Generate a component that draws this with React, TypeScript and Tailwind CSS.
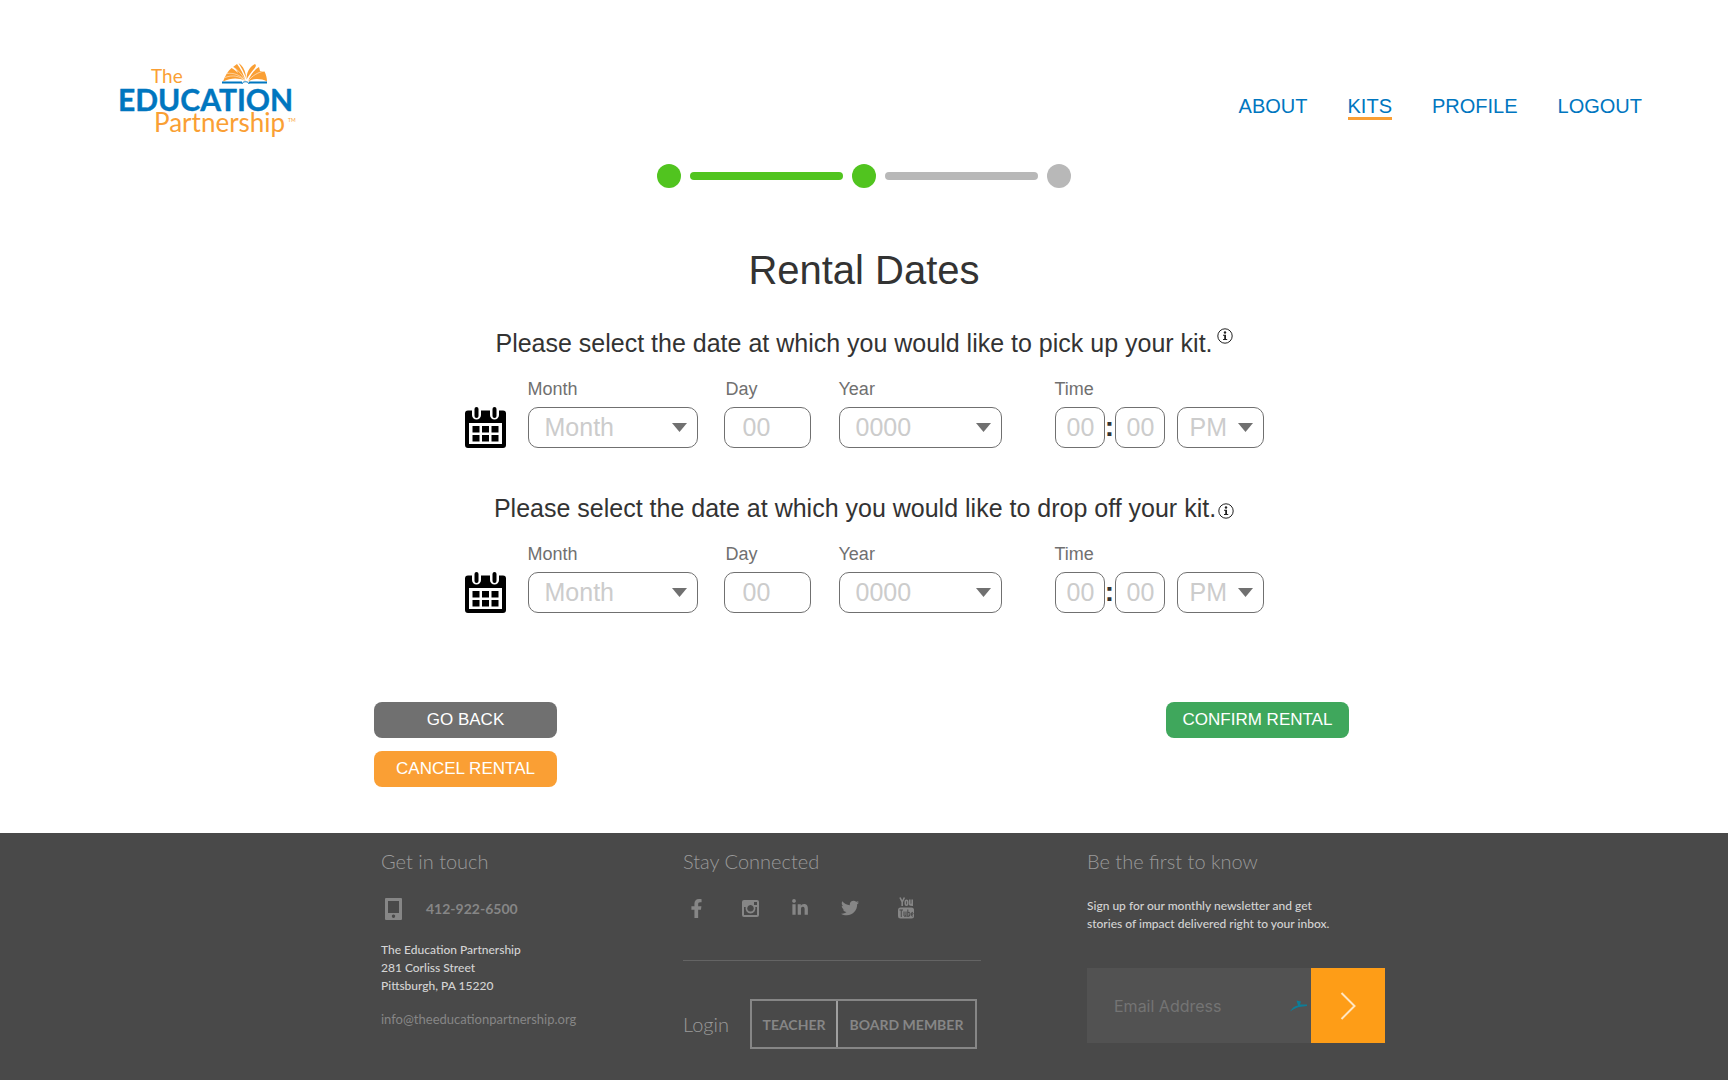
import { FaFacebookF, FaLinkedinIn, FaTwitter } from "react-icons/fa";

const NAV = ["ABOUT", "KITS", "PROFILE", "LOGOUT"];
const MONTHS = [
  "January", "February", "March", "April", "May", "June", "July",
  "August", "September", "October", "November", "December",
];
const YEARS = ["2020", "2021", "2022", "2023"];

function Logo() {
  return (
    <svg width="188" height="80" viewBox="-4 0 188 80" role="img" aria-label="The Education Partnership">
      <text x="31" y="20" fontFamily="Lato" fontSize="19" fill="#fa9f34">The</text>
      <text x="-2" y="48" fontFamily="Lato" fontWeight="700" fontSize="30" fill="#0076bf" stroke="#0076bf" strokeWidth="0.400">EDUCATION</text>
      <text x="34" y="69" fontFamily="Lato" fontSize="26" fill="#fa9f34">Partnership</text>
      <text x="168" y="59" fontFamily="Lato" fontSize="5" fill="#fa9f34">TM</text>
      <path d="M103 18.500 C105 13 108 8 111.500 5 C114 6 116 8 118 10 C117 7 115 5 113 4 L117 1 C121 6 124 12 125.500 18 C118 14.500 111 15 103 18.500Z" fill="#fa9f34" />
      <path d="M105 14.500 C113 11.500 119 13 125 17.500 M107 10.500 C114 9.500 120 12 125 17.500 M113 4 C118 7 122 11 125 17" fill="none" stroke="#fff" strokeWidth="0.500" />
      <path d="M126.500 16.500 C126.500 10 129 4 135 1 C136.500 2 136 3.500 134 6 C131 9.500 129 12 126.500 16.500Z" fill="#fa9f34" />
      <path d="M118.500 0 L121 2 C124 5 126 10 126 15 C124 9 121 4 118.500 0Z" fill="#fa9f34" />
      <path d="M128 18.500 C130 12 134 7 139 4 L140 8 L144.500 8.500 C146 11 147 15 147 18.500 C140 15 134 15.500 128 18.500Z" fill="#fa9f34" />
      <path d="M128 18 C133 12 138 9.500 144 8" fill="none" stroke="#fff" strokeWidth="0.600" />
      <path d="M102 19.500 H122 M129 19.500 H147" stroke="#0076bf" strokeWidth="2" />
      <path d="M122 21 C122 18 129 18 129 21" fill="none" stroke="#0076bf" strokeWidth="1" />
    </svg>
  );
}

function InfoIcon() {
  return (
    <svg width="16" height="16" viewBox="0 0 16 16" role="img" aria-label="More information" className="shrink-0">
      <circle cx="8" cy="8" r="7.200" fill="none" stroke="#222" strokeWidth="1" />
      <circle cx="8" cy="4.500" r="1.200" fill="#222" />
      <path d="M6 6.700 H9 V11 H10.200 V12 H6 V11 H7.200 V7.700 H6Z" fill="#222" />
    </svg>
  );
}

function CalendarIcon() {
  return (
    <svg width="41" height="41" viewBox="0 0 41 41" aria-hidden="true">
      <path
        fillRule="evenodd"
        d="M3 3.500 H7 V8 a4.500 4.500 0 0 0 9 0 V3.500 H25 V8 a4.500 4.500 0 0 0 9 0 V3.500 H38 a3 3 0 0 1 3 3 V38 a3 3 0 0 1 -3 3 H3 a3 3 0 0 1 -3 -3 V6.500 a3 3 0 0 1 3 -3Z M4 16 V37 H37 V16Z"
      />
      <rect x="9.500" y="0" width="4" height="11" rx="2" />
      <rect x="27.500" y="0" width="4" height="11" rx="2" />
      {[7.5, 17, 26.5].map((x) =>
        [19, 28].map((y) => <rect key={`${x}-${y}`} x={x} y={y} width="7" height="6.500" />)
      )}
    </svg>
  );
}

function Arrow() {
  return (
    <svg width="15" height="9" viewBox="0 0 15 9" aria-hidden="true" className="pointer-events-none absolute right-[11px] top-4">
      <path d="M0 0 H15 L7.500 9Z" fill="#707070" />
    </svg>
  );
}

function Select({ id, label, placeholder, options, width, pad }: {
  id: string; label?: string; placeholder: string; options: string[]; width: string; pad: string;
}) {
  return (
    <div className={`relative ${width}`}>
      <select
        id={id}
        aria-label={label}
        defaultValue=""
        className={`h-[41px] w-full appearance-none rounded-[10px] border border-[#707070] bg-white text-[25px] leading-[39px] text-[#ccc] ${pad}`}
      >
        <option value="">{placeholder}</option>
        {options.map((o) => <option key={o}>{o}</option>)}
      </select>
      <Arrow />
    </div>
  );
}

function Box({ id, label, className }: { id: string; label?: string; className: string }) {
  return (
    <input
      id={id}
      aria-label={label}
      placeholder="00"
      inputMode="numeric"
      className={`h-[41px] rounded-[10px] border border-[#707070] bg-white text-[25px] placeholder:text-[#ccc] ${className}`}
    />
  );
}

function Field({ id, label, inset, children }: { id: string; label: string; inset?: boolean; children: React.ReactNode }) {
  return (
    <div>
      <label htmlFor={id} className={`mb-2 block text-[18px] leading-5 text-[#707070] ${inset ? "pl-0.5" : ""}`}>{label}</label>
      {children}
    </div>
  );
}

function DateSection({ id, action, raised }: { id: string; action: string; raised?: boolean }) {
  return (
    <section>
      <h2 className="flex h-[30px] items-center justify-center whitespace-nowrap text-[25px] leading-[30px] text-[#333]">
        Please select the date at which you would like to {action} your kit.
        <span className={raised ? "ml-1 self-start" : "ml-0.5 self-end pb-1"}><InfoIcon /></span>
      </h2>
      <div className="mt-[21px] flex items-end justify-center">
        <div className="mr-[22px]"><CalendarIcon /></div>
        <Field id={`${id}-month`} label="Month">
          <Select id={`${id}-month`} placeholder="Month" options={MONTHS} width="w-[170px]" pad="pl-4" />
        </Field>
        <div className="ml-[26px]">
          <Field id={`${id}-day`} label="Day" inset>
            <Box id={`${id}-day`} className="block w-[87px] pl-[18px]" />
          </Field>
        </div>
        <div className="ml-7">
          <Field id={`${id}-year`} label="Year">
            <Select id={`${id}-year`} placeholder="0000" options={YEARS} width="w-[163px]" pad="pl-4" />
          </Field>
        </div>
        <div className="ml-[53px]">
          <Field id={`${id}-hour`} label="Time">
            <div className="flex">
              <Box id={`${id}-hour`} className="w-[50px] pl-[11px]" />
              <span className="w-[10px] text-center text-[28px] font-bold leading-10 text-[#333]">:</span>
              <Box id={`${id}-minute`} label="Minutes" className="w-[50px] pl-[11px]" />
              <div className="ml-3">
                <Select id={`${id}-period`} label="AM or PM" placeholder="PM" options={["AM"]} width="w-[87px]" pad="pl-3" />
              </div>
            </div>
          </Field>
        </div>
      </div>
    </section>
  );
}

const BUTTON = "h-9 w-[183px] rounded-lg text-[17px] leading-9 text-white";
const FOOTER_HEADING = "text-[20px] font-light leading-6 text-[#9a9a9a]";

function InstagramIcon() {
  return (
    <svg width="17" height="17" viewBox="0 0 17 17" aria-hidden="true">
      <path
        fillRule="evenodd"
        fill="currentColor"
        d="M2 0 H15 a2 2 0 0 1 2 2 V15 a2 2 0 0 1 -2 2 H2 a2 2 0 0 1 -2 -2 V2 a2 2 0 0 1 2 -2Z M12 2 V5 H15 V2Z M2 7 V15 H15 V7 H13.300 a5 5 0 1 1 -9.600 0Z M8.500 5 a3.300 3.300 0 1 0 .01 0Z"
      />
    </svg>
  );
}

function YoutubeIcon() {
  return (
    <svg width="18" height="22" viewBox="0 0 18 22" aria-hidden="true">
      <g fill="none" stroke="currentColor" strokeWidth="1.600">
        <path d="M3 0.500 L5.200 5 L7.400 0.500 M5.200 5 V9" />
        <rect x="8.300" y="3.300" width="2.400" height="5" rx="1.200" />
        <path d="M12.800 2.500 V7.500 Q13 8.500 15.200 7 M15.200 2.500 V9" />
      </g>
      <rect x="1" y="10.500" width="16" height="11" rx="2.500" fill="currentColor" />
      <g fill="none" stroke="#494949" strokeWidth="1">
        <path d="M2.500 13 H6 M4.250 13 V20" />
        <path d="M7 14.500 V19 Q7.500 20 9 18.500 M9 14.500 V20" />
        <path d="M10.800 12.500 V20 M10.800 15.500 Q12.800 14.500 12.800 16.500 V18 Q12.800 20 10.800 19" />
        <path d="M14.300 17.200 H16 V16 Q15.200 14.500 14.300 16 V18.500 Q15.200 20 16 18.500" />
      </g>
    </svg>
  );
}

function Footer() {
  return (
    <footer className="flex-1 bg-[#494949] font-[Lato,sans-serif] text-[#868686]">
      <div className="mx-auto flex max-w-[1042px] pb-7 pl-[38px] pt-4">
        <section className="w-[302px]">
          <h3 className={FOOTER_HEADING}>Get in touch</h3>
          <p className="mt-6 flex items-center gap-6 pl-1 text-[14px] font-bold leading-6">
            <svg width="17" height="22" viewBox="0 0 17 22" aria-hidden="true">
              <path fillRule="evenodd" fill="currentColor" d="M1 0 H16 a1 1 0 0 1 1 1 V21 a1 1 0 0 1 -1 1 H1 a1 1 0 0 1 -1 -1 V1 a1 1 0 0 1 1 -1Z M3 3 V15 H14 V3Z M8.500 16.500 a1.700 1.700 0 1 0 .01 0Z" />
            </svg>
            412-922-6500
          </p>
          <address className="mt-5 text-[12px] font-medium not-italic leading-[18px] text-[#d4d4d4]">
            The Education Partnership<br />281 Corliss Street<br />Pittsburgh, PA 15220
          </address>
          <a href="mailto:info@theeducationpartnership.org" className="mt-3.5 inline-block text-[13px] leading-5">
            info@theeducationpartnership.org
          </a>
        </section>
        <section className="w-[298px]">
          <h3 className={FOOTER_HEADING}>Stay Connected</h3>
          <div className="mt-[23px] flex h-6 items-center">
            <a href="#facebook" aria-label="Facebook" className="ml-1"><FaFacebookF size={19} /></a>
            <a href="#instagram" aria-label="Instagram" className="ml-9"><InstagramIcon /></a>
            <a href="#linkedin" aria-label="LinkedIn" className="ml-8"><FaLinkedinIn size={18} /></a>
            <a href="#twitter" aria-label="Twitter" className="ml-8"><FaTwitter size={18} /></a>
            <a href="#youtube" aria-label="YouTube" className="ml-[38px]"><YoutubeIcon /></a>
          </div>
          <hr className="mt-10 border-[#646464]" />
          <div className="mt-[38px] flex items-center">
            <h3 className={FOOTER_HEADING}>Login</h3>
            <div className="ml-auto mr-1 flex h-[50px] border-2 border-[#868686] text-[14px] font-bold">
              <button className="w-[86px] border-r-2 border-[#a0a0a0]">TEACHER</button>
              <button className="w-[137px]">BOARD MEMBER</button>
            </div>
          </div>
        </section>
        <section className="ml-auto w-[298px]">
          <h3 className={FOOTER_HEADING}>Be the first to know</h3>
          <p className="mt-6 whitespace-nowrap text-[12px] font-medium leading-[18px] text-[#d4d4d4]">
            Sign up for our monthly newsletter and get<br />stories of impact delivered right to your inbox.
          </p>
          <form className="mt-[35px] flex h-[75px]" onSubmit={(e) => e.preventDefault()}>
            <div className="relative flex-1">
              <input
                type="email"
                aria-label="Email Address"
                placeholder="Email Address"
                className="h-full w-full bg-[#525252] pl-[27px] font-[Inter,sans-serif] text-base placeholder:text-[#747474]"
              />
              <svg width="17" height="12" viewBox="0 0 17 12" aria-hidden="true" className="absolute right-1 top-8">
                <path d="M0 11.500 C3 7 5 6 8 5.500 L6.500 0.500 L11 1.500 L10 4.500 L17 4.500 V6 L9 7 C5 8 3 10 0 11.500Z" fill="#0d7d98" />
              </svg>
            </div>
            <button aria-label="Subscribe" className="flex w-[74px] items-center justify-center bg-[#fe9d17]">
              <svg width="16" height="28" viewBox="0 0 16 28" fill="none" stroke="#ffe6c2" strokeWidth="2" aria-hidden="true">
                <path d="M1.500 1 L14.500 14 L1.500 27" />
              </svg>
            </button>
          </form>
        </section>
      </div>
    </footer>
  );
}

export default function App() {
  return (
    <div className="flex min-h-screen flex-col bg-white font-['Liberation_Sans',Arial,sans-serif]">
      <header className="flex items-start justify-between pl-[116px] pr-[86px] pt-[63px]">
        <a href="#home"><Logo /></a>
        <nav className="mt-8 flex gap-10 text-[20px] leading-[22px] text-[#0076bf]">
          {NAV.map((n) => (
            <a
              key={n}
              href={`#${n.toLowerCase()}`}
              className={n === "KITS" ? "border-b-[3px] border-[#fa9f34]" : ""}
            >
              {n}
            </a>
          ))}
        </nav>
      </header>
      <main>
        <div className="mt-[21px] flex items-center justify-center gap-[9px]">
          <span className="size-6 rounded-full bg-[#51c41f]" />
          <span className="h-2 w-[153px] rounded-full bg-[#51c41f]" />
          <span className="size-6 rounded-full bg-[#51c41f]" />
          <span className="h-2 w-[153px] rounded-full bg-[#b8b8b8]" />
          <span className="size-6 rounded-full bg-[#b8b8b8]" />
        </div>
        <h1 className="mt-[59px] text-center text-[40px] leading-[46px] text-[#333]">Rental Dates</h1>
        <div className="mt-[35px] flex flex-col gap-[45px]">
          <DateSection id="pickup" action="pick up" raised />
          <DateSection id="dropoff" action="drop off" />
        </div>
        <div className="mx-auto mb-[46px] mt-[89px] flex max-w-[980px] items-start justify-between pr-[5px]">
          <div className="flex flex-col gap-[13px]">
            <button className={`${BUTTON} bg-[#707070]`}>GO BACK</button>
            <button className={`${BUTTON} bg-[#fa9f34]`}>CANCEL RENTAL</button>
          </div>
          <button className={`${BUTTON} bg-[#3fa75c]`}>CONFIRM RENTAL</button>
        </div>
      </main>
      <Footer />
    </div>
  );
}
